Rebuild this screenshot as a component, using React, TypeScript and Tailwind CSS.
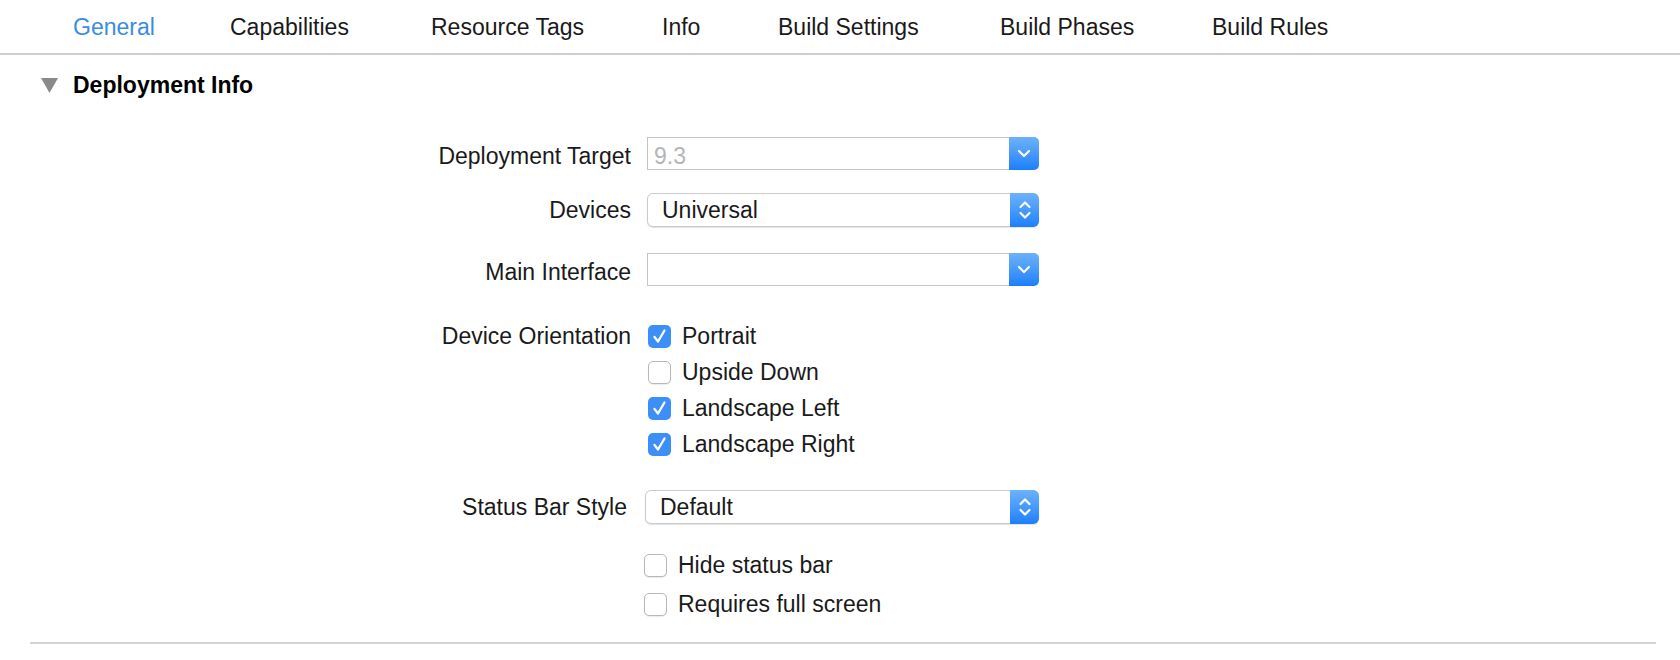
import React from 'react'

// tab label + width of its slot (start of next tab minus own start)
const tabs: [string, number][] = [
  ['General', 157],
  ['Capabilities', 201],
  ['Resource Tags', 231],
  ['Info', 116],
  ['Build Settings', 222],
  ['Build Phases', 212],
  ['Build Rules', 200],
]

function ChevronDown() {
  return (
    <svg width="14" height="9" viewBox="0 0 14 9" fill="none">
      <path d="M2 2 L7 7 L12 2" stroke="white" strokeWidth="2.2" strokeLinecap="round" strokeLinejoin="round" />
    </svg>
  )
}

function UpDown() {
  return (
    <svg width="14" height="22" viewBox="0 0 14 22" fill="none">
      <path d="M2.5 8 L7 3.5 L11.5 8" stroke="white" strokeWidth="2.2" strokeLinecap="round" strokeLinejoin="round" />
      <path d="M2.5 14 L7 18.5 L11.5 14" stroke="white" strokeWidth="2.2" strokeLinecap="round" strokeLinejoin="round" />
    </svg>
  )
}

// combo box style: square white field + blue arrow button
function ComboBox({ value }: { value?: string }) {
  return (
    <div className="flex w-[392px] h-[33px]">
      <div className="flex-1 flex items-center border border-r-0 border-[#c4c4c4] bg-white pl-[6px] pt-[5px]">
        <span className="text-[23px] leading-none text-[#b5b5b5]">{value}</span>
      </div>
      <div className="w-[30px] flex items-center justify-center rounded-r-[5px] bg-gradient-to-b from-[#6cb2fb] to-[#197ffb]">
        <ChevronDown />
      </div>
    </div>
  )
}

// popup button: rounded, shadowed, up/down arrows
function PopupButton({ value, width = 392 }: { value: string; width?: number }) {
  return (
    <div
      className="flex h-[34px] rounded-[6px] border border-[#cacaca] bg-white shadow-[0_1px_1px_rgba(0,0,0,0.12)]"
      style={{ width }}
    >
      <div className="flex-1 flex items-center pl-[14px]">
        <span className="text-[23px] leading-none text-[#1a1a1a]">{value}</span>
      </div>
      <div className="w-[29px] -my-px -mr-px flex items-center justify-center rounded-r-[6px] bg-gradient-to-b from-[#6cb2fb] to-[#197ffb]">
        <UpDown />
      </div>
    </div>
  )
}

function Checkbox({ checked, label }: { checked: boolean; label: string }) {
  return (
    <div className="flex items-center gap-[11px] h-full">
      {checked ? (
        <div className="w-[23px] h-[23px] rounded-[5px] bg-[#3b8ff6] flex items-center justify-center">
          <svg width="23" height="23" viewBox="0 0 23 23" fill="none">
            <path d="M6.5 12 L10 16.5 L16.5 5.5" stroke="white" strokeWidth="2.3" strokeLinecap="round" strokeLinejoin="round" />
          </svg>
        </div>
      ) : (
        <div className="w-[23px] h-[23px] rounded-[5px] border border-[#b8b8b8] bg-white shadow-[0_1px_1px_rgba(0,0,0,0.08)]" />
      )}
      <span className="text-[23px] leading-none text-[#1a1a1a]">{label}</span>
    </div>
  )
}

function Row({ label, children, className = '', labelClass = '' }: { label?: string; children: React.ReactNode; className?: string; labelClass?: string }) {
  return (
    <div className={`flex items-center ${className}`}>
      <div className={`w-[631px] text-right text-[23px] leading-none text-[#1a1a1a] ${labelClass}`}>{label}</div>
      <div className="ml-[16px]">{children}</div>
    </div>
  )
}

export default function App() {
  return (
    <div className="w-[1680px] h-[660px] bg-white overflow-hidden font-['Liberation_Sans',Arial,sans-serif]">
      {/* Tab bar */}
      <div className="h-[55px] flex items-center pl-[73px] pt-[1px] border-b-2 border-[#cfcfcf]">
        {tabs.map(([t, w], i) => (
          <span
            key={t}
            className={`shrink-0 text-[23px] leading-none ${i === 0 ? 'text-[#3a8be2]' : 'text-[#1a1a1a]'}`}
            style={{ width: w }}
          >
            {t}
          </span>
        ))}
      </div>

      {/* Section header */}
      <div className="mt-[15px] h-[30px] flex items-center">
        <svg className="ml-[41px]" width="17" height="15" viewBox="0 0 17 15">
          <path d="M0 0 H17 L8.5 15 Z" fill="#8a8a8a" />
        </svg>
        <span className="ml-[15px] text-[23px] font-bold leading-none text-black">Deployment Info</span>
      </div>

      {/* Form */}
      <Row label="Deployment Target" className="mt-[37px] h-[33px]" labelClass="pt-[6px]">
        <ComboBox value="9.3" />
      </Row>
      <Row label="Devices" className="mt-[23px] h-[34px]">
        <PopupButton value="Universal" />
      </Row>
      <Row label="Main Interface" className="mt-[26px] h-[33px]" labelClass="pt-[6px]">
        <ComboBox value="" />
      </Row>

      <div className="mt-[32px] flex">
        <div className="w-[631px] h-[36px] flex items-center justify-end text-[23px] leading-none text-[#1a1a1a]">
          Device Orientation
        </div>
        <div className="ml-[17px] flex flex-col">
          <div className="h-[36px]"><Checkbox checked label="Portrait" /></div>
          <div className="h-[36px]"><Checkbox checked={false} label="Upside Down" /></div>
          <div className="h-[36px]"><Checkbox checked label="Landscape Left" /></div>
          <div className="h-[36px]"><Checkbox checked label="Landscape Right" /></div>
        </div>
      </div>

      <div className="mt-[28px] flex items-center h-[34px]">
        <div className="w-[627px] text-right text-[23px] leading-none text-[#1a1a1a]">Status Bar Style</div>
        <div className="ml-[18px]">
          <PopupButton value="Default" width={394} />
        </div>
      </div>

      <div className="mt-[22px] pl-[644px] flex flex-col">
        <div className="h-[39px]"><Checkbox checked={false} label="Hide status bar" /></div>
        <div className="h-[39px]"><Checkbox checked={false} label="Requires full screen" /></div>
      </div>

      <div className="mt-[18px] ml-[30px] w-[1626px] h-[2px] bg-[#d4d4d4]" />
    </div>
  )
}
